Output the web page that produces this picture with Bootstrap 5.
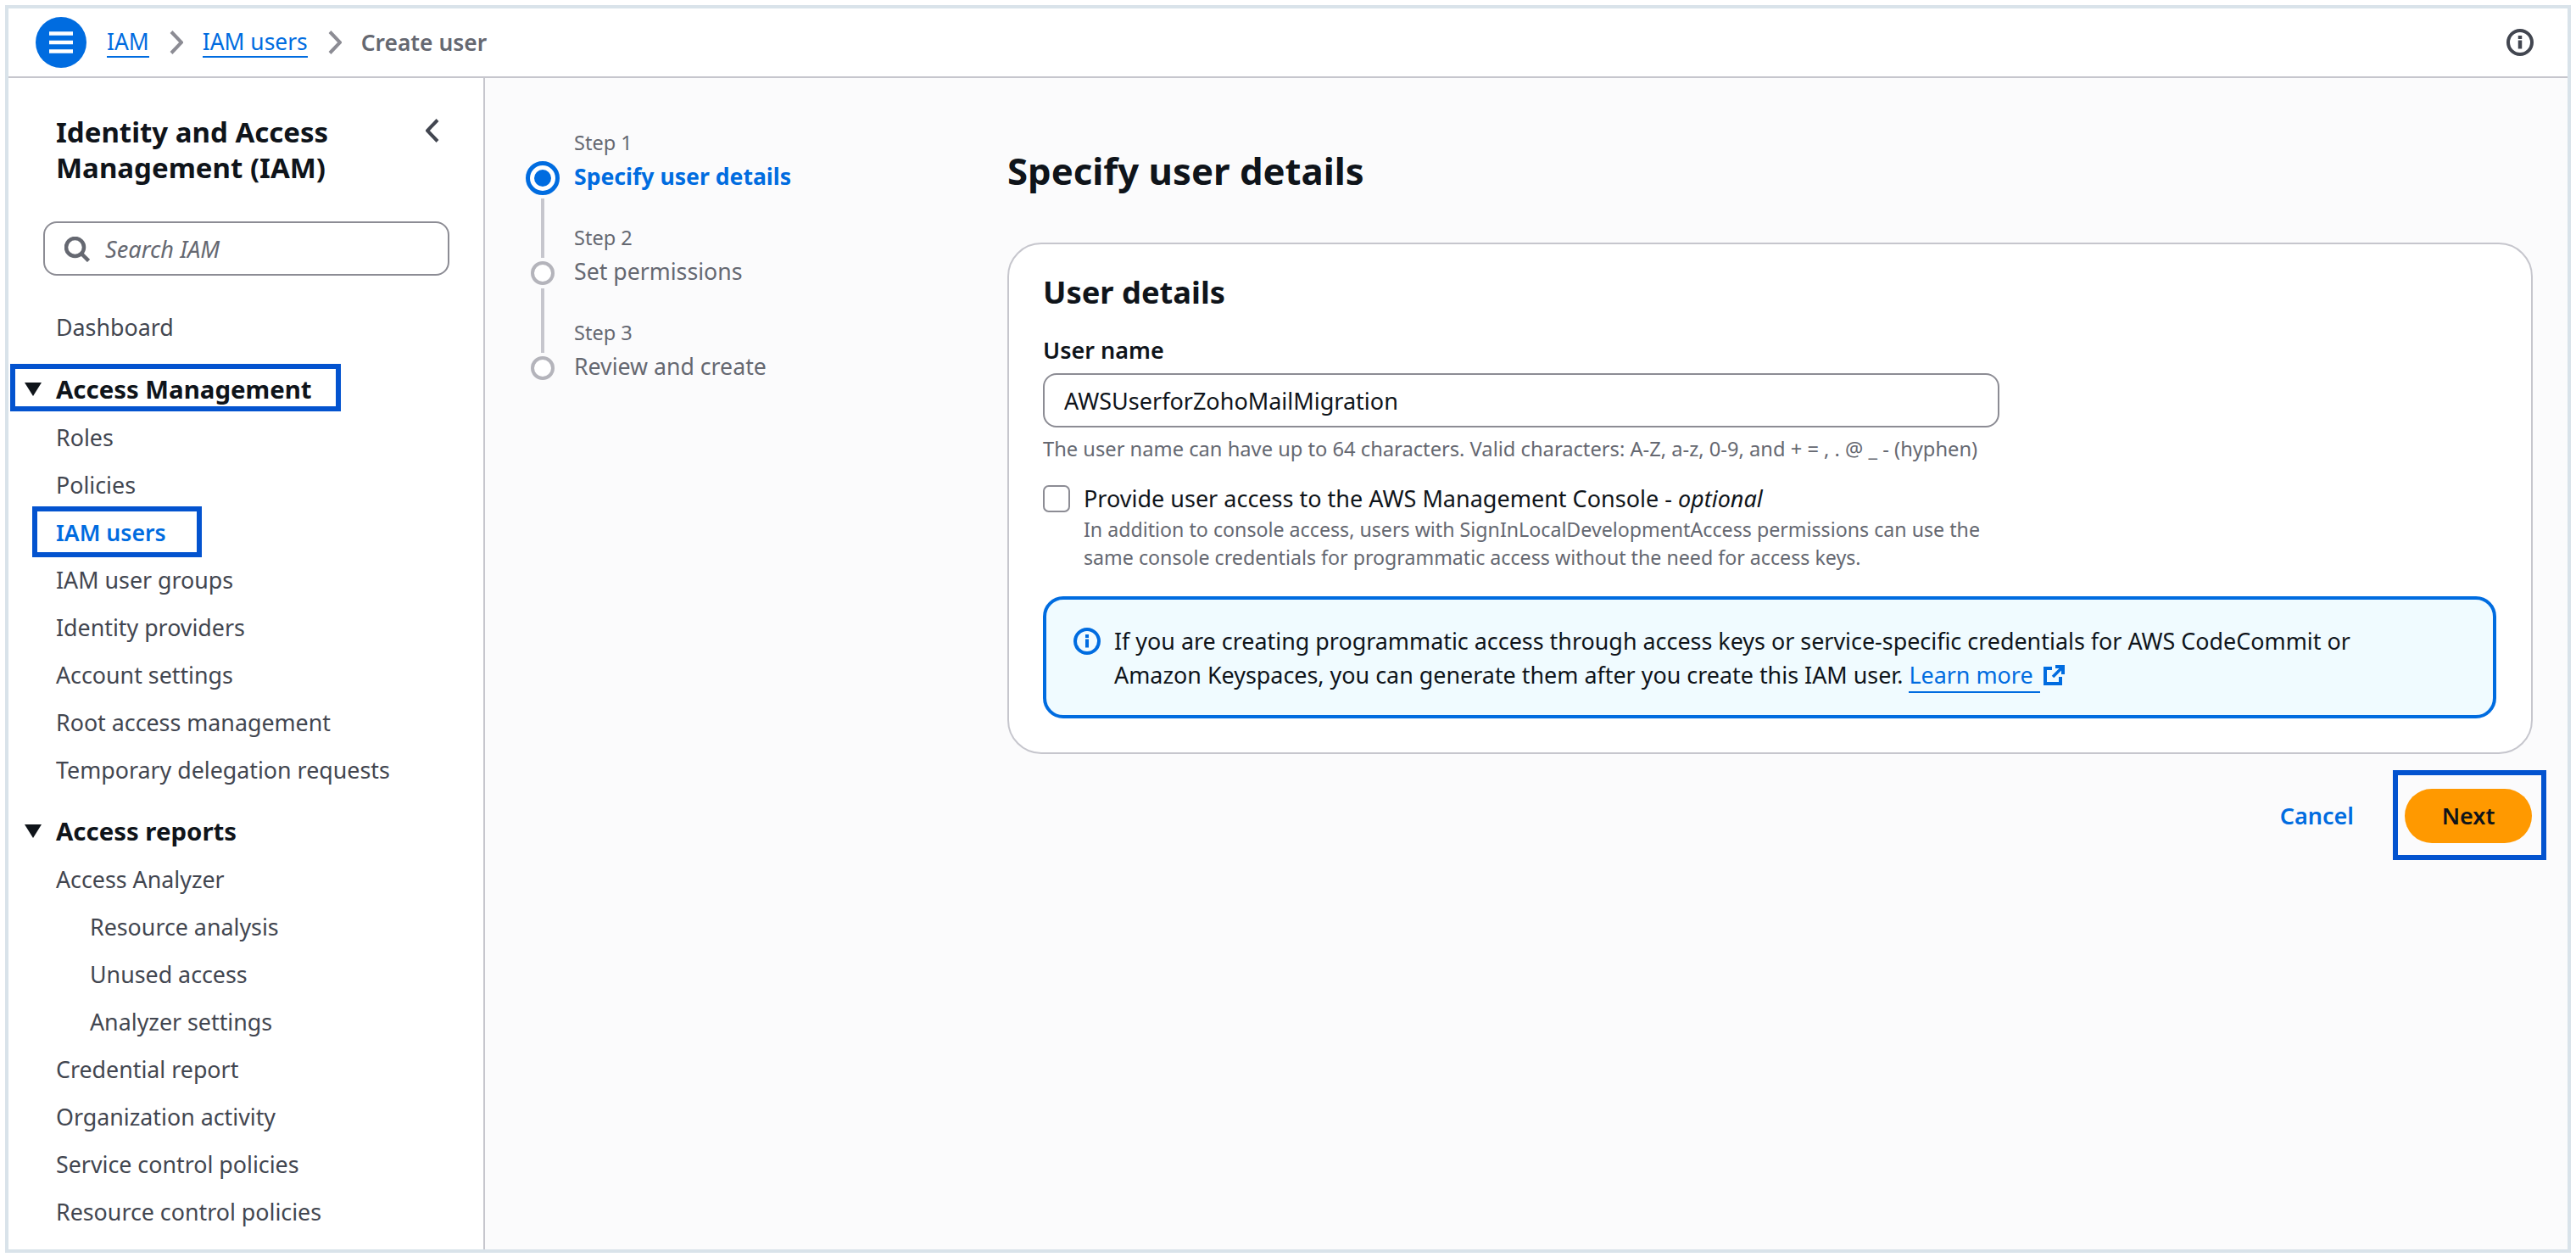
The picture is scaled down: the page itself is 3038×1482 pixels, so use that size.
<!DOCTYPE html>
<html lang="en">
<head>
<meta charset="utf-8">
<title>Create user</title>
<link href="https://cdn.jsdelivr.net/npm/bootstrap@5.3.0/dist/css/bootstrap.min.css" rel="stylesheet">
<style>
html,body{height:100%;overflow:hidden}
body{background:#fff;font-family:"Noto Sans","Liberation Sans",sans-serif;font-size:27px;color:#0f141a;padding:6px 6px 5px 6px}
.frame{height:1471px;width:3026px;border:4px solid #d9e3ea}
.topbar{height:82px;flex:0 0 82px;background:#fff;border-bottom:2px solid #c6c6cd;padding-left:32px;padding-right:40px}
.menu-btn{width:60px;height:60px;border-radius:50%;background:#006ce0;border:0;padding:0}
.crumbs{--bs-breadcrumb-margin-bottom:0;margin-left:24px;gap:0;font-size:26.4px;line-height:36px}
.crumbs .breadcrumb-item{padding:0;display:flex;align-items:center}
.crumbs .breadcrumb-item::before{display:none}
.crumbs a{color:#006ce0;text-decoration:none;border-bottom:2px solid #006ce0;line-height:34px}
.crumbs .active{color:#656871;font-weight:600}
.crumb-sep{margin:0 23px 0 24px;display:block}
.side{width:562px;flex:0 0 562px;background:#fff;border-right:2px solid #c6c6cd;padding:0 0 0 56px}
.side-title{font-size:33px;line-height:42px;font-weight:700;margin:43px 0 0 0;color:#0f141a}
.side-head{padding-right:52px}
.side-search{margin:42px 0 0 -15px;width:479px;height:64px;border:2px solid #8c8c94;border-radius:16px;padding:0 0 0 23px;gap:18px;background:#fff}
.side-search svg{margin-top:2px}
.side-search .form-control{border:0;background:transparent;padding:0;font-style:italic;font-size:27.2px;color:#656871;box-shadow:none;height:40px;margin-top:2px}
.side-search .form-control::placeholder{color:#656871;opacity:1}
.nav-list{list-style:none;margin:0;padding:0}
.nav-row{display:block;height:56px;line-height:56px;font-size:26.8px;color:#424650;text-decoration:none;white-space:nowrap}
.dash{margin-top:33px}
.sec-head{height:58px;line-height:59px;font-size:29.4px;font-weight:700;color:#0f141a;white-space:nowrap;position:relative}
.tri{position:absolute;left:-37px;top:21px}
.sec-one{margin-top:16px;position:relative}
.sec-two{margin-top:15px}
.nav-sub{padding-left:40px}
.here{color:#006ce0;font-weight:600;font-size:26.6px}
.mark-box{position:absolute;border:6px solid #0353cf;pointer-events:none}
.mark-sec{left:-54px;top:-1px;width:390px;height:56px}
.mark-item{left:-28px;top:-3px;width:200px;height:60px}
.mark-next{left:-14px;right:-17px;top:-22px;bottom:-20px}
.pos-anchor{position:relative}
.content{background:#fbfbfc;padding:0 41px 0 48px;min-width:0}
.steps{width:568px;flex:0 0 568px;padding-top:60px}
.step-row{display:flex;align-items:flex-end;gap:17px}
.rail{width:40px;flex:0 0 40px;display:flex;flex-direction:column;align-items:center}
.rail-line{width:4px;background:#c6c6cd;margin-bottom:4px}
.line-a{height:70px}
.line-b{height:76px}
.dot-on{width:40px;height:40px;border-radius:50%;border:5px solid #006ce0;background:#fff;margin-bottom:4px;display:flex;align-items:center;justify-content:center}
.dot-on span{width:20px;height:20px;border-radius:50%;background:#006ce0;display:block}
.dot-off{width:28px;height:28px;border-radius:50%;border:4px solid #b4b4bb;background:#fff;margin-bottom:4px}
.step-num{font-size:23.5px;line-height:32px;color:#656871;margin-bottom:4px}
.step-name{font-size:26.7px;line-height:40px;color:#656871}
.step-name.now{color:#006ce0;font-weight:700;font-size:26.6px}
.step-one{margin-bottom:6px}
.page-title{font-size:43.7px;line-height:60px;font-weight:700;margin:79px 0 55px 0;color:#0f141a}
.panel{--bs-card-border-width:2px;--bs-card-border-color:#c6c6cd;--bs-card-border-radius:40px;--bs-card-bg:#fff;height:603px;padding:34px 40px 0 40px}
.panel-title{font-size:36.3px;line-height:44px;font-weight:700;margin:0 0 29px 0;color:#0f141a}
.field-label{font-size:27px;line-height:36px;font-weight:600;margin:0 0 9px 0;color:#0f141a;display:block}
.name-input{width:1128px;height:64px;border:2px solid #8c8c94;border-radius:16px;padding:0 23px;font-size:27px;color:#0f141a;font-family:inherit}
.hint{font-size:23.7px;line-height:32px;color:#656871;margin-top:9px;white-space:nowrap}
.chk-row{margin-top:27px;gap:16px}
.chk-box{width:32px;height:32px;flex:0 0 32px;margin:0;border:2px solid #8c8c94;border-radius:8px;background:#fff;float:none}
.chk-row .form-check-input{margin:0}
.chk-main{font-size:27px;line-height:32px;color:#0f141a;white-space:nowrap}
.chk-desc{font-size:23.2px;line-height:33px;color:#656871;margin-top:4px;white-space:nowrap}
.notice{--bs-alert-border-radius:24px;--bs-alert-margin-bottom:0;margin-top:29px;width:1714px;height:144px;border:4px solid #006ce0;background:#f0fbff;padding:29px 20px 0 32px;gap:16px;color:#0f141a;font-size:26.9px;line-height:40px}
.notice a{color:#006ce0;text-decoration:none;border-bottom:2px solid #006ce0;padding-bottom:1px;padding-right:8px;margin-right:4px}
.info-ic{flex:0 0 32px;margin-top:4px}
.ext-ic{vertical-align:-2px}
.foot{margin-top:41px;gap:60px;padding-right:1px}
.btn-cancel{--bs-btn-color:#006ce0;--bs-btn-hover-color:#006ce0;padding:0;border:0;font-size:27px;font-weight:600;color:#006ce0}
.btn-next{width:150px;height:64px;border:0;border-radius:32px;background:#ff9900;color:#0f141a;font-size:27px;font-weight:600;padding:0}
</style>
</head>
<body>
<div class="frame d-flex flex-column">
  <header class="topbar d-flex align-items-center justify-content-between">
    <div class="d-flex align-items-center">
      <button class="menu-btn d-flex flex-column align-items-center justify-content-center" type="button" aria-label="Menu">
        <svg width="28" height="26" viewBox="0 0 28 26"><path d="M0 2.5h28M0 13h28M0 23.5h28" stroke="#fff" stroke-width="4.5" fill="none"/></svg>
      </button>
      <nav aria-label="breadcrumb">
        <ol class="breadcrumb crumbs align-items-center">
          <li class="breadcrumb-item"><a href="#">IAM</a><svg class="crumb-sep" width="16" height="28" viewBox="0 0 16 28"><path d="M2 1.5 14 14 2 26.5" stroke="#8c8c94" stroke-width="4" fill="none"/></svg></li>
          <li class="breadcrumb-item"><a href="#">IAM users</a><svg class="crumb-sep" width="16" height="28" viewBox="0 0 16 28"><path d="M2 1.5 14 14 2 26.5" stroke="#8c8c94" stroke-width="4" fill="none"/></svg></li>
          <li class="breadcrumb-item active" aria-current="page">Create user</li>
        </ol>
      </nav>
    </div>
    <svg width="32" height="32" viewBox="0 0 32 32"><circle cx="16" cy="16" r="14" fill="none" stroke="#424650" stroke-width="4"/><path d="M16 13.5v10" stroke="#424650" stroke-width="4.5"/><path d="M16 8v4" stroke="#424650" stroke-width="4.5"/></svg>
  </header>
  <div class="d-flex flex-grow-1" style="min-height:0">
    <aside class="side">
      <div class="side-head d-flex justify-content-between align-items-start">
        <h2 class="side-title">Identity and Access<br>Management (IAM)</h2>
        <svg class="mt-5" width="16" height="28" viewBox="0 0 16 28"><path d="M14 1.5 2 14l12 12.5" stroke="#424650" stroke-width="4" fill="none"/></svg>
      </div>
      <div class="side-search d-flex align-items-center">
        <svg width="30" height="30" viewBox="0 0 30 30" class="flex-shrink-0"><circle cx="12.5" cy="12.5" r="10.5" fill="none" stroke="#656871" stroke-width="4.5"/><path d="m20 20 8.500 8.500" stroke="#656871" stroke-width="4.500" fill="none"/></svg>
        <input class="form-control" type="text" placeholder="Search IAM" aria-label="Search IAM">
      </div>
      <a class="nav-row dash" href="#">Dashboard</a>
      <div class="sec-head sec-one"><svg class="tri" width="20" height="16" viewBox="0 0 20 16"><path d="M0 0h20L10 16z" fill="#0f141a"/></svg>Access Management<span class="mark-box mark-sec"></span></div>
      <ul class="nav-list">
        <li><a class="nav-row" href="#">Roles</a></li>
        <li><a class="nav-row" href="#">Policies</a></li>
        <li class="pos-anchor"><a class="nav-row here" href="#">IAM users</a><span class="mark-box mark-item"></span></li>
        <li><a class="nav-row" href="#">IAM user groups</a></li>
        <li><a class="nav-row" href="#">Identity providers</a></li>
        <li><a class="nav-row" href="#">Account settings</a></li>
        <li><a class="nav-row" href="#">Root access management</a></li>
        <li><a class="nav-row" href="#">Temporary delegation requests</a></li>
      </ul>
      <div class="sec-head sec-two"><svg class="tri" width="20" height="16" viewBox="0 0 20 16"><path d="M0 0h20L10 16z" fill="#0f141a"/></svg>Access reports</div>
      <ul class="nav-list">
        <li><a class="nav-row" href="#">Access Analyzer</a></li>
        <li class="nav-sub"><a class="nav-row" href="#">Resource analysis</a></li>
        <li class="nav-sub"><a class="nav-row" href="#">Unused access</a></li>
        <li class="nav-sub"><a class="nav-row" href="#">Analyzer settings</a></li>
        <li><a class="nav-row" href="#">Credential report</a></li>
        <li><a class="nav-row" href="#">Organization activity</a></li>
        <li><a class="nav-row" href="#">Service control policies</a></li>
        <li><a class="nav-row" href="#">Resource control policies</a></li>
      </ul>
    </aside>
    <main class="content d-flex flex-grow-1">
      <div class="steps">
        <div class="step-row">
          <div class="rail"><div class="dot-on"><span></span></div></div>
          <div class="step-one"><div class="step-num">Step 1</div><div class="step-name now">Specify user details</div></div>
        </div>
        <div class="step-row">
          <div class="rail"><div class="rail-line line-a"></div><div class="dot-off"></div></div>
          <div><div class="step-num">Step 2</div><div class="step-name">Set permissions</div></div>
        </div>
        <div class="step-row">
          <div class="rail"><div class="rail-line line-b"></div><div class="dot-off"></div></div>
          <div><div class="step-num">Step 3</div><div class="step-name">Review and create</div></div>
        </div>
      </div>
      <div class="flex-grow-1">
        <h1 class="page-title">Specify user details</h1>
        <div class="card panel">
          <h2 class="panel-title">User details</h2>
          <label class="field-label" for="un">User name</label>
          <input id="un" class="name-input d-block" type="text" value="AWSUserforZohoMailMigration">
          <div class="hint">The user name can have up to 64 characters. Valid characters: A-Z, a-z, 0-9, and + = , . @ _ - (hyphen)</div>
          <div class="d-flex chk-row">
            <input class="form-check-input chk-box" type="checkbox" id="con">
            <div>
              <label class="chk-main d-block" for="con">Provide user access to the AWS Management Console - <em>optional</em></label>
              <div class="chk-desc">In addition to console access, users with SignInLocalDevelopmentAccess permissions can use the<br>same console credentials for programmatic access without the need for access keys.</div>
            </div>
          </div>
          <div class="alert notice d-flex align-items-start" role="alert">
            <svg class="info-ic" width="32" height="32" viewBox="0 0 32 32"><circle cx="16" cy="16" r="14" fill="none" stroke="#006ce0" stroke-width="4"/><path d="M16 13.5v10M16 8v4" stroke="#006ce0" stroke-width="4" fill="none"/></svg>
            <div>If you are creating programmatic access through access keys or service-specific credentials for AWS CodeCommit or<br>Amazon Keyspaces, you can generate them after you create this IAM user. <a href="#">Learn more</a><svg class="ext-ic" width="25" height="24" viewBox="0 0 25 24"><path d="M10 4H2v18h18v-8" stroke="#006ce0" stroke-width="4" fill="none"/><path d="M14 2h9v9" stroke="#006ce0" stroke-width="4" fill="none"/><path d="M22 3 11 14" stroke="#006ce0" stroke-width="3.500" fill="none"/></svg></div>
          </div>
        </div>
        <div class="foot d-flex justify-content-end align-items-center">
          <button class="btn btn-cancel" type="button">Cancel</button>
          <div class="pos-anchor d-flex"><button class="btn btn-next" type="button">Next</button><span class="mark-box mark-next"></span></div>
        </div>
      </div>
    </main>
  </div>
</div>
<script src="https://cdn.jsdelivr.net/npm/bootstrap@5.3.0/dist/js/bootstrap.bundle.min.js"></script>
</body>
</html>
